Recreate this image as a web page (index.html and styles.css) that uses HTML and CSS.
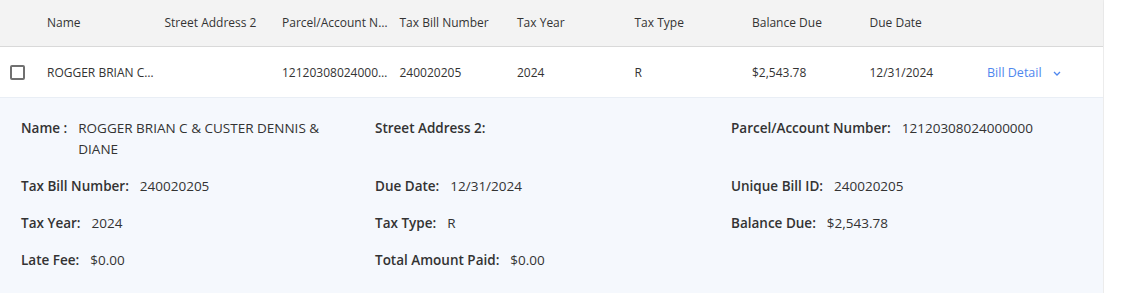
FILE: index.html
```html
<!DOCTYPE html>
<html lang="en">
  <head>
    <meta charset="UTF-8" />
    <meta name="viewport" content="width=device-width, initial-scale=1.0" />
    <title>Tax Bills</title>
    <link rel="stylesheet" href="styles.css">
  </head>
  <body>
    <div class="bill-table">
      <div class="table-row table-head">
        <div class="cell"></div>
        <div class="cell">Name</div>
        <div class="cell">Street Address 2</div>
        <div class="cell">Parcel/Account Number</div>
        <div class="cell">Tax Bill Number</div>
        <div class="cell">Tax Year</div>
        <div class="cell">Tax Type</div>
        <div class="cell">Balance Due</div>
        <div class="cell">Due Date</div>
        <div class="cell"></div>
      </div>

      <div class="table-row table-body">
        <div class="cell check-cell"><span class="checkbox"></span></div>
        <div class="cell">ROGGER BRIAN C &amp; CUSTER DENNIS &amp; DIANE</div>
        <div class="cell"></div>
        <div class="cell">12120308024000000</div>
        <div class="cell">240020205</div>
        <div class="cell">2024</div>
        <div class="cell">R</div>
        <div class="cell">$2,543.78</div>
        <div class="cell">12/31/2024</div>
        <div class="cell">
          <a class="detail-link" href="#">Bill Detail
            <svg class="chevron" width="8" height="5" viewBox="0 0 8 5">
              <path d="M1 1l3 3 3-3" fill="none" stroke="currentColor" stroke-width="1.3" />
            </svg>
          </a>
        </div>
      </div>

      <!-- 展開した明細 -->
      <div class="bill-detail">
        <div class="field">
          <span class="label">Name :</span>
          <span class="value name-value">ROGGER BRIAN C &amp; CUSTER DENNIS &amp; DIANE</span>
        </div>
        <div class="field">
          <span class="label">Street Address 2:</span>
          <span class="value"></span>
        </div>
        <div class="field">
          <span class="label">Parcel/Account Number:</span>
          <span class="value">12120308024000000</span>
        </div>

        <div class="field">
          <span class="label">Tax Bill Number:</span>
          <span class="value">240020205</span>
        </div>
        <div class="field">
          <span class="label">Due Date:</span>
          <span class="value">12/31/2024</span>
        </div>
        <div class="field">
          <span class="label">Unique Bill ID:</span>
          <span class="value">240020205</span>
        </div>

        <div class="field">
          <span class="label">Tax Year:</span>
          <span class="value">2024</span>
        </div>
        <div class="field">
          <span class="label">Tax Type:</span>
          <span class="value">R</span>
        </div>
        <div class="field">
          <span class="label">Balance Due:</span>
          <span class="value">$2,543.78</span>
        </div>

        <div class="field">
          <span class="label">Late Fee:</span>
          <span class="value">$0.00</span>
        </div>
        <div class="field">
          <span class="label">Total Amount Paid:</span>
          <span class="value">$0.00</span>
        </div>
      </div>
    </div>
  </body>
</html>
```

FILE: styles.css
```css
body {
  margin: 0;
  font-family: "Open Sans", "Noto Sans", sans-serif;
  color: #333;
  background-color: #fff;
}
.bill-table {
  width: 1104px;
  border-right: 1px solid #ececec;
  box-sizing: border-box;
}
.table-row {
  display: grid;
  grid-template-columns: 39px repeat(8, 117.5px) 1fr;
  align-items: center;
  font-size: 12px;
}
.table-head {
  height: 45px;
  padding-bottom: 1px;
  background-color: #f3f3f3;
  border-bottom: 1px solid #d9d9d9;
  box-shadow: 0 1px 2px rgba(0, 0, 0, 0.05);
}
.table-body {
  height: 50px;
  background-color: #fff;
  border-bottom: 1px solid #e9eef5;
}
.cell {
  padding-left: 8px;
  white-space: nowrap;
  overflow: hidden;
  text-overflow: ellipsis;
}
.check-cell {
  padding-left: 10px;
  display: flex;
}
.checkbox {
  width: 11px;
  height: 11px;
  border: 2px solid #707070;
  border-radius: 2px;
}
.detail-link {
  color: #4f87ee;
  text-decoration: none;
  font-size: 12.5px;
}
.chevron {
  margin-left: 8px;
  vertical-align: 1px;
}

.bill-detail {
  background-color: #f5f8fd;
  padding: 20px 18px 26px 21px;
  display: grid;
  grid-template-columns: 354px 356px 1fr;
  row-gap: 16px;
  font-size: 13.5px;
  line-height: 21px;
}
.field {
  display: flex;
  padding-right: 30px;
}
.label {
  font-weight: 600;
  white-space: nowrap;
  margin-right: 11px;
}
.value {
  color: #333;
}
```
